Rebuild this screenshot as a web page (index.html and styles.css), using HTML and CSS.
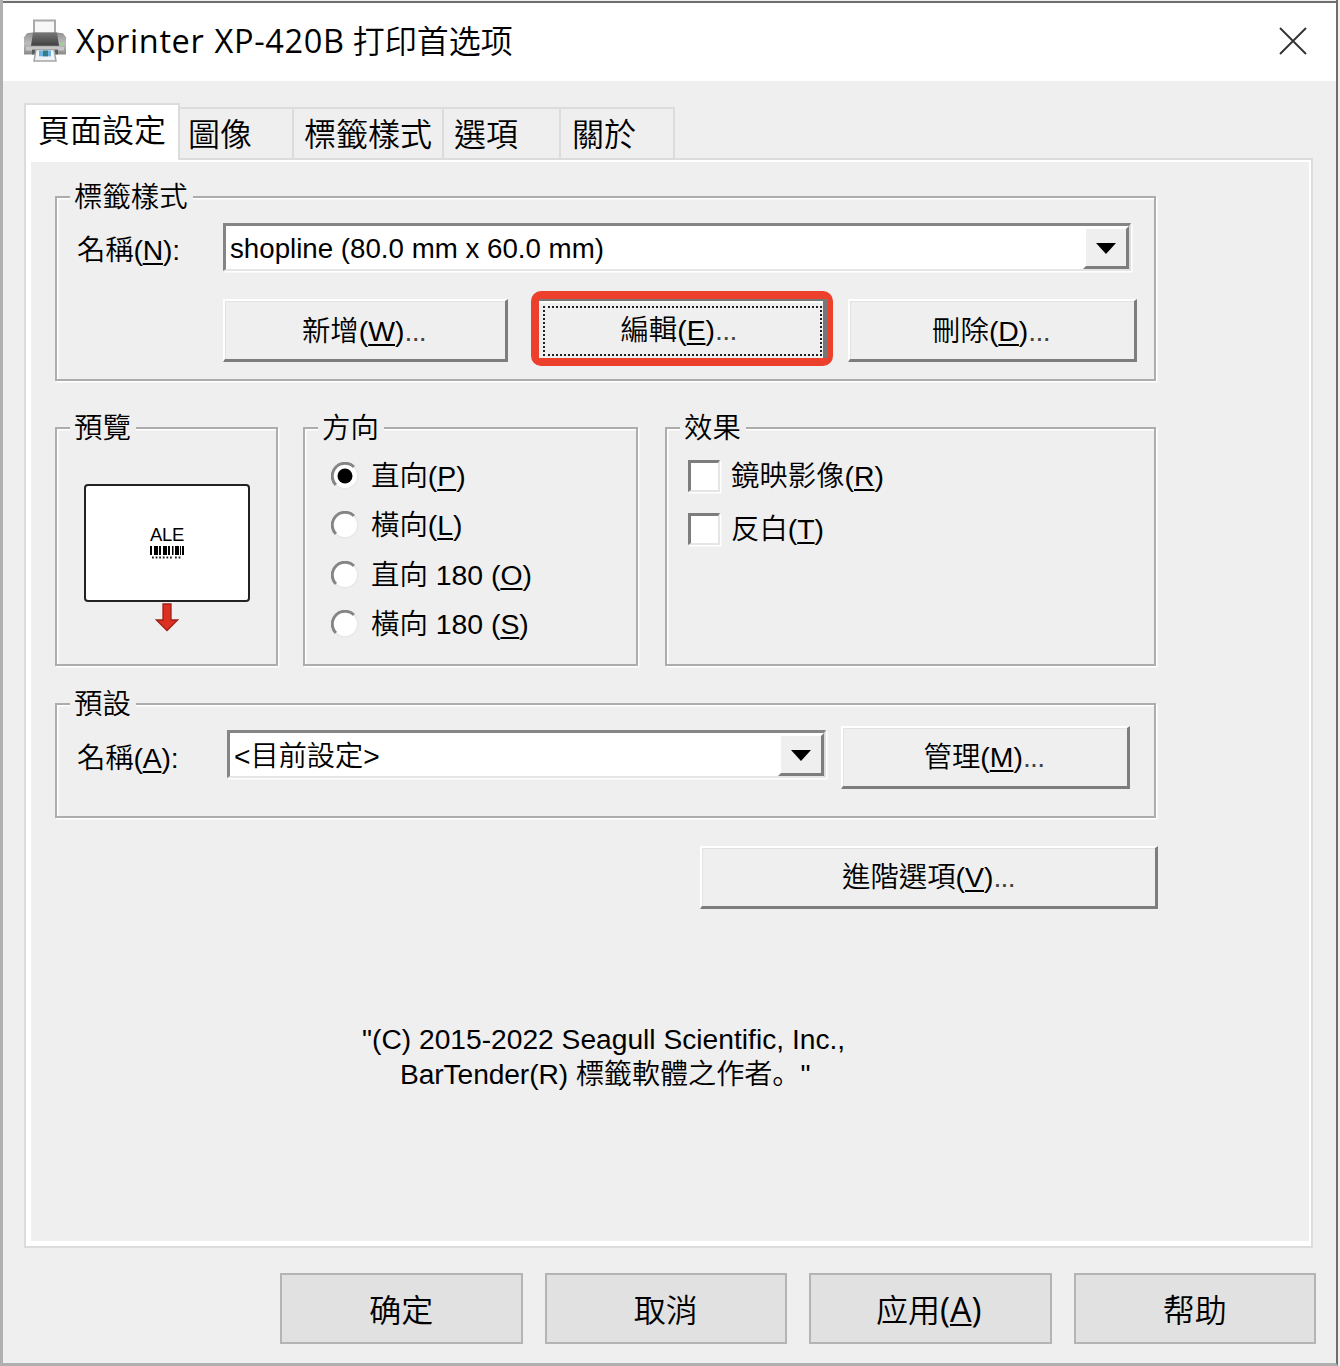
FILE: index.html
```html
<!DOCTYPE html>
<html lang="zh-Hant">
<head>
<meta charset="utf-8">
<title>Xprinter XP-420B 打印首选项</title>
<link rel="stylesheet" href="styles.css">
</head>
<body>
<main class="window">
  <header class="titlebar">
    <svg class="printer" width="44" height="44" viewBox="0 0 44 46" preserveAspectRatio="none">
      <defs>
        <linearGradient id="body" x1="0" y1="0" x2="0" y2="1"><stop offset="0" stop-color="#929292"/><stop offset=".5" stop-color="#bcbcbc"/><stop offset="1" stop-color="#8b8b8b"/></linearGradient>
        <linearGradient id="slot" x1="0" y1="0" x2="0" y2="1"><stop offset="0" stop-color="#777"/><stop offset="1" stop-color="#414141"/></linearGradient>
      </defs>
      <path d="M11 1.5h21v16H11z" fill="#f7f7f7" stroke="#aaa" stroke-width="2"/>
      <path d="M4 15l5-1h25l6 1 3 4v18H1V19z" fill="url(#body)"/>
      <path d="M3 29h38v4H3z" fill="#c6c6c6"/>
      <path d="M10 14h24l2 14H8z" fill="url(#slot)"/>
      <path d="M9 32h26v5H9z" fill="#555a5e"/>
      <path d="M13 32h18l2 12H11z" fill="#eef3f5" stroke="#a5a5a5" stroke-width="1.5"/>
      <path d="M16 33h12v6H16z" fill="#6db3df"/><path d="M20 33h5v6h-5z" fill="#327b87"/>
      <path d="M38 25h2v3h-2z" fill="#8ee374"/>
    </svg>
    <h1 class="title"><span class="title-latin">Xprinter XP-420B</span> 打印首选项</h1>
    <svg class="close" width="30" height="30" viewBox="0 0 30 30"><path d="M2 2l26 26M28 2L2 28" fill="none" stroke="#333" stroke-width="1.9"/></svg>
  </header>
  <nav class="tabs">
    <span class="tab tab-active">頁面設定</span><span class="tab tab-image">圖像</span><span class="tab tab-style">標籤樣式</span><span class="tab tab-options">選項</span><span class="tab tab-about">關於</span>
  </nav>
  <section class="panel">
    <div class="group label-group">
      <h2 class="legend">標籤樣式</h2>
      <div class="field">
        <span class="name">名稱(<u>N</u>):</span>
        <div class="combo"><span class="value">shopline (80.0 mm x 60.0 mm)</span><span class="drop"><svg width="20" height="11"><path d="M0 0h20L10 11z"/></svg></span></div>
      </div>
      <div class="actions">
        <span class="button">新增(<u>W</u>)<span class="dots">...</span></span>
        <span class="highlight"><span class="button focused"><span class="focus-ring">編輯(<u>E</u>)<span class="dots">...</span></span></span></span>
        <span class="button">刪除(<u>D</u>)<span class="dots">...</span></span>
      </div>
    </div>
    <div class="trio">
      <div class="group preview">
        <h2 class="legend">預覽</h2>
        <div class="sheet">
          <span class="ale">ALE</span>
          <svg class="barcode" width="34" height="14" viewBox="0 0 34 14"><path d="M0 0h2v9H0zM4 0h4v9H4zM9 0h2v9H9zM13 0h4v9h-4zM18 0h2v9h-2zM22 0h1.5v9H22zM25 0h4v9h-4zM30 0h1v9h-1zM32 0h2v9h-2z"/><path d="M2 11.5h20M25 11.5h7" stroke="#222" stroke-width="2" stroke-dasharray="1.8 1.8"/></svg>
        </div>
        <svg class="arrow" width="24" height="29" viewBox="0 0 24 29"><path d="M8 1h8v16h6.500L12 27.500 1.500 17H8z" fill="#dc3022" stroke="#9f2018" stroke-width="1.3"/></svg>
      </div>
      <div class="group direction">
        <h2 class="legend">方向</h2>
        <div class="radio"><svg class="dot" width="28" height="28" viewBox="0 0 28 28"><circle cx="14" cy="14" r="12.5" fill="#fff"/><path d="M5 23A12 12 0 0 1 23 5" fill="none" stroke="#858585" stroke-width="3"/><path d="M23 5A12 12 0 0 1 5 23" fill="none" stroke="#e8e8e8" stroke-width="1.5"/><circle cx="14" cy="14" r="7.5"/></svg><span>直向(<u>P</u>)</span></div>
        <div class="radio"><svg class="dot" width="28" height="28" viewBox="0 0 28 28"><circle cx="14" cy="14" r="12.5" fill="#fff"/><path d="M5 23A12 12 0 0 1 23 5" fill="none" stroke="#858585" stroke-width="3"/><path d="M23 5A12 12 0 0 1 5 23" fill="none" stroke="#e8e8e8" stroke-width="1.5"/></svg><span>橫向(<u>L</u>)</span></div>
        <div class="radio"><svg class="dot" width="28" height="28" viewBox="0 0 28 28"><circle cx="14" cy="14" r="12.5" fill="#fff"/><path d="M5 23A12 12 0 0 1 23 5" fill="none" stroke="#858585" stroke-width="3"/><path d="M23 5A12 12 0 0 1 5 23" fill="none" stroke="#e8e8e8" stroke-width="1.5"/></svg><span>直向 180 (<u>O</u>)</span></div>
        <div class="radio"><svg class="dot" width="28" height="28" viewBox="0 0 28 28"><circle cx="14" cy="14" r="12.5" fill="#fff"/><path d="M5 23A12 12 0 0 1 23 5" fill="none" stroke="#858585" stroke-width="3"/><path d="M23 5A12 12 0 0 1 5 23" fill="none" stroke="#e8e8e8" stroke-width="1.5"/></svg><span>橫向 180 (<u>S</u>)</span></div>
      </div>
      <div class="group effects">
        <h2 class="legend">效果</h2>
        <div class="check"><span class="box"></span><span>鏡映影像(<u>R</u>)</span></div>
        <div class="check"><span class="box"></span><span>反白(<u>T</u>)</span></div>
      </div>
    </div>
    <div class="group preset">
      <h2 class="legend">預設</h2>
      <div class="field">
        <span class="name">名稱(<u>A</u>):</span>
        <div class="combo"><span class="value">&lt;目前設定&gt;</span><span class="drop"><svg width="20" height="11"><path d="M0 0h20L10 11z"/></svg></span></div>
        <span class="button">管理(<u>M</u>)<span class="dots">...</span></span>
      </div>
    </div>
    <span class="button advanced">進階選項(<u>V</u>)<span class="dots">...</span></span>
    <p class="copyright"><span>"(C) 2015-2022 Seagull Scientific, Inc.,</span><span class="second" lang="zh-Hans">BarTender(R) 標籤軟體之作者。"</span></p>
  </section>
  <footer class="footer">
    <span class="flat">确定</span><span class="flat">取消</span><span class="flat apply">应用<span class="key">(<u>A</u>)</span></span><span class="flat">帮助</span>
  </footer>
</main>
</body>
</html>
```
FILE: styles.css
```css
* { box-sizing: border-box; }
body { margin: 0; background: #efefef; }
.window {
  width: 1338px; height: 1366px; padding-top: 1px;
  border-left: 3px solid #b0b0b0; border-right: 2px solid #6d6f6d; border-bottom: 3px solid #b0b0b0;
  background: #efefef; color: #000;
  font: 350 28.4px/36px "Liberation Sans", "Noto Sans CJK TC", sans-serif;
}
u { text-decoration-thickness: 2px; text-underline-offset: 3px; text-decoration-skip-ink: none; }
svg { display: block; flex: none; }

.titlebar { display: flex; align-items: center; height: 80px; padding: 0 28px 0 20px; background: #fff; border-top: 2px solid #6d6f6d; }
.printer { margin-top: -3px; }
.close { margin-top: -2px; }
.title { margin: -5px auto 0 9px; font: 350 32px/44px "Noto Sans CJK SC", sans-serif; white-space: nowrap; word-spacing: 1px; }
.title-latin { font-family: "Open Sans", "Noto Sans", sans-serif; font-weight: 400; font-size: 32.5px; letter-spacing: .66px; }

.tabs { display: flex; align-items: flex-end; height: 77px; padding-left: 21px; font: 350 32px/44px "Noto Sans CJK TC", sans-serif; white-space: nowrap; }
.tab { height: 51px; padding: 1px 0 0 9px; border: 2px solid #dcdcdc; border-left: 0; border-bottom: 0; }
.tab-active { width: 156px; height: 57px; margin-bottom: -2px; padding: 1px 0 0 12px; background: #fff; border-left: 2px solid #dcdcdc; z-index: 1; }
.tab-image { width: 114px; padding-left: 8px; }
.tab-style { width: 150px; padding-left: 10px; }
.tab-options { width: 117px; padding-left: 10px; }
.tab-about { width: 114px; padding-left: 11px; }

.panel {
  display: flex; flex-direction: column; width: 1289px; height: 1090px; margin-left: 21px; padding: 36px 0 0 24px;
  border: 2px solid #dcdcdc; background: #efefef;
  box-shadow: inset 5px 0 #fff, inset -2px 0 #fff, inset 0 2px #fff, inset 0 -5px #fff;
}
.group { border: 2px solid #adadad; box-shadow: 1.5px 1.5px #fff, inset 1.5px 1.5px #fff; padding-left: 13px; }
.legend { width: fit-content; height: 36px; margin: -19px 0 0; padding: 0 5px 0 4px; background: #efefef; font: inherit; white-space: nowrap; }
.label-group { width: 1101px; height: 185px; flex: none; }
.label-group, .trio, .preset { margin-left: 5px; }
.field { display: flex; padding-left: 7px; }
.name { width: 146px; padding-top: 9px; flex: none; letter-spacing: -.2px; }
.combo { display: flex; justify-content: space-between; width: 908px; height: 48px; background: #fff; border: 3px solid #858585; border-right: 2px solid #dcdcdc; border-bottom: 2px solid #e5e5e5; box-shadow: 1.5px 1.5px #fff; }
.value { padding: 5px 0 0 4px; font-size: 27.7px; }
.drop { display: grid; place-items: center; width: 46px; height: 43px; padding-top: 2px; background: #efefef; border: 3px solid #fff; border-right-color: #7d7d7d; border-bottom-color: #7d7d7d; }
.label-group .field { margin-top: 8px; }
.actions { display: flex; padding-left: 153px; margin-top: 28px; }
.button { display: flex; justify-content: center; width: 285px; height: 63px; padding: 12px 2px 0 0; border: 2px solid #fff; border-right: 3px solid #7d7d7d; border-bottom: 3px solid #7d7d7d; background: #efefef; box-shadow: inset 1px 1px #e2e2e2; white-space: nowrap; }
.dots { color: #444; letter-spacing: -.7px; }
.highlight { display: block; width: 302px; height: 75px; margin: -8px 15px 0 23px; border: 8px solid #ec402c; border-radius: 10px; }
.focused { width: 286px; height: 59px; padding: 5px 1px 2px 4px; border: 0; border-top: 2px solid #777; border-right: 5px solid #777; box-shadow: inset 0 2px #fff; }
.focus-ring { display: flex; justify-content: center; width: 100%; height: 100%; padding: 4px 8px 0 0; border: 2px dotted #222; }
.actions .button:last-child { width: 289px; }

.trio { display: flex; margin-top: 46px; }
.trio .group { height: 239px; }
.trio .preview { width: 223px; margin-right: 25px; }
.trio .direction { width: 335px; margin-right: 27px; }
.trio .effects { width: 491px; }
.sheet { display: flex; flex-direction: column; align-items: center; width: 166px; height: 118px; margin: 38px 0 0 14px; padding-top: 38px; background: #fff; border: 2px solid #222; border-radius: 4px; }
.ale { font: 18.5px/22px "Liberation Sans", sans-serif; letter-spacing: -.3px; }
.arrow { margin: 1px 0 0 85px; }
.radio { display: flex; height: 49.3px; margin-left: 13px; white-space: nowrap; }
.dot { margin-right: 12px; }
.direction .legend { margin-bottom: 16px; }
.radio span { margin-top: -4px; }
.check { display: flex; height: 53px; margin-left: 8px; white-space: nowrap; }
.check span + span { margin-top: -2px; }
.effects .legend { margin-bottom: 14px; }
.box { width: 32px; height: 32px; margin-right: 11px; background: #fff; border: 3px solid #7d7d7d; border-right: 2px solid #e5e5e5; border-bottom: 2px solid #e5e5e5; box-shadow: 1.5px 1.5px #fff; }

.preset { width: 1101px; height: 115px; flex: none; margin-top: 37px; }
.preset .name { width: 150px; padding-top: 14px; }
.preset .field { margin-top: 4px; }
.preset .combo { width: 599px; margin: 4px 15px 0 0; }
.preset .value { font-size: 28.2px; }
.preset .button { width: 289px; padding-top: 11px; }
.advanced { flex: none; width: 458px; margin: 28px 0 0 650px; padding: 11px 0 0; }
.copyright { display: flex; flex-direction: column; margin: 113px 0 0 312px; font-size: 28.2px; line-height: 35px; white-space: nowrap; }
.second { padding-left: 38px; font-family: "Liberation Sans", "Noto Sans CJK SC", sans-serif; letter-spacing: -.1px; }

.footer { display: flex; justify-content: flex-end; gap: 22px; padding: 25px 20px 0 0; }
.flat { width: 242.5px; height: 71px; display: flex; justify-content: center; padding-top: 10px; background: #e1e1e1; border: 2px solid #b4b4b4; font: 350 32px/46px "Noto Sans CJK SC", sans-serif; }
.apply { padding-right: 3px; }
.key { font: 400 34px/48px "Open Sans", sans-serif; }
.key u { text-underline-offset: 2px; }
```
